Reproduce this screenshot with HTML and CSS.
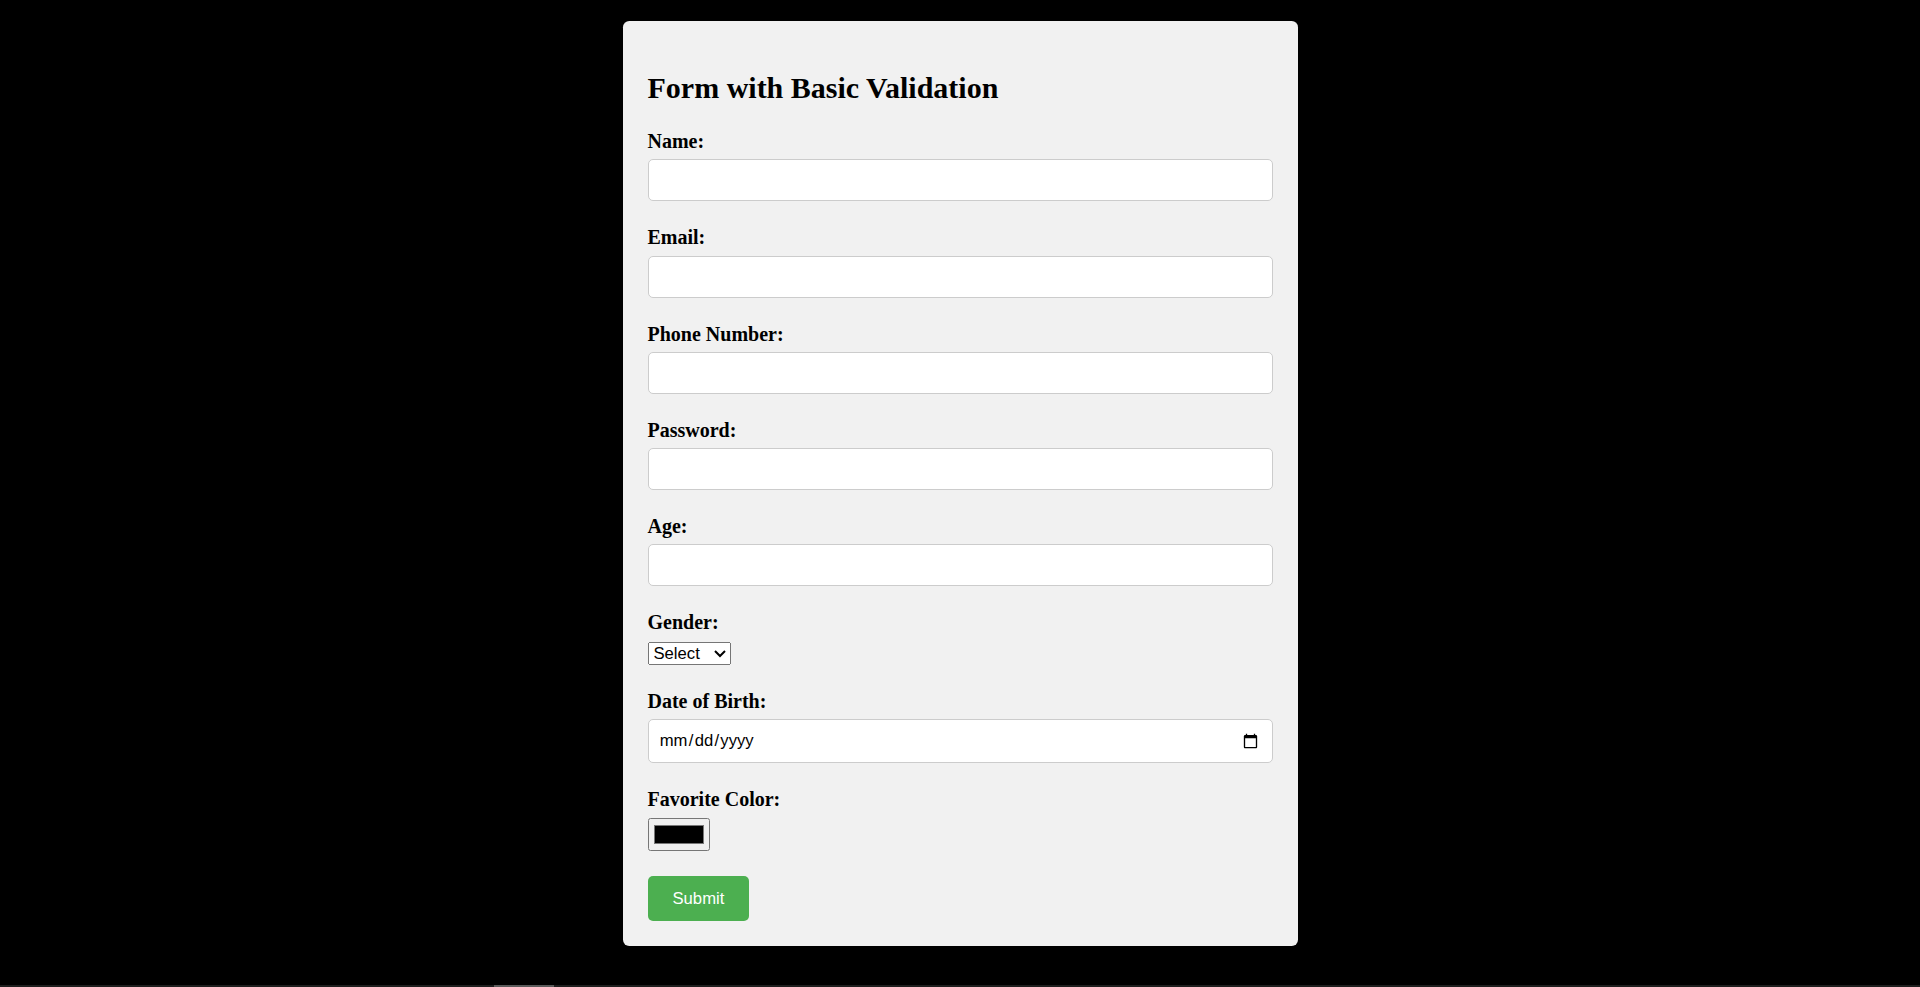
FILE: index.html
```html
<!DOCTYPE html>
<html lang="en">
<head>
<meta charset="utf-8">
<title>Form with Basic Validation</title>
<link rel="stylesheet" href="styles.css">
</head>
<body>
<div class="page">
  <div class="card">
    <h2 class="title">Form with Basic Validation</h2>
    <form class="form" novalidate>
      <div class="group">
        <label class="label" for="name">Name:</label>
        <input class="field" type="text" id="name">
      </div>
      <div class="group">
        <label class="label" for="email">Email:</label>
        <input class="field" type="email" id="email">
      </div>
      <div class="group">
        <label class="label" for="phone">Phone Number:</label>
        <input class="field" type="tel" id="phone">
      </div>
      <div class="group">
        <label class="label" for="password">Password:</label>
        <input class="field" type="password" id="password">
      </div>
      <div class="group">
        <label class="label" for="age">Age:</label>
        <input class="field" type="number" id="age">
      </div>
      <div class="group">
        <label class="label" for="gender">Gender:</label>
        <select class="select" id="gender">
          <option>Select</option>
          <option>Male</option>
          <option>Female</option>
          <option>Other</option>
        </select>
      </div>
      <div class="group">
        <label class="label" for="dob">Date of Birth:</label>
        <input class="field" type="date" id="dob">
      </div>
      <div class="group">
        <label class="label" for="color">Favorite Color:</label>
        <input class="color" type="color" id="color" value="#000000">
      </div>
      <button class="submit" type="submit">Submit</button>
    </form>
  </div>
</div>
<div class="hscroll"><div class="hscroll-thumb"></div></div>
</body>
</html>
```

FILE: styles.css
```css
html, body {
  margin: 0;
  padding: 0;
}

body {
  background: #000000;
  font-family: "Liberation Serif", "Times New Roman", serif;
  color: #000000;
  overflow: hidden;
}

.page {
  zoom: 1.25;
  display: flex;
  justify-content: center;
  padding-top: 17px;
}

.card {
  width: 500px;
  padding: 20px;
  background: #f1f1f1;
  border-radius: 5px;
}

.title {
  font-size: 24px;
  font-weight: bold;
  margin: 0.83em 0;
}

.form {
  margin: 0;
}

.group {
  margin-bottom: 20px;
}

.label {
  display: block;
  font-weight: bold;
  font-size: 16px;
  margin-bottom: 5px;
}

.field {
  display: block;
  width: 100%;
  box-sizing: border-box;
  padding: 8px;
  border: 1px solid #cccccc;
  border-radius: 4px;
  background: #ffffff;
  font-family: "Liberation Sans", Arial, sans-serif;
  font-size: 13.333px;
}

.select {
  font-family: "Liberation Sans", Arial, sans-serif;
  font-size: 13.333px;
}

.color {
  display: block;
}

.submit {
  display: block;
  padding: 10px 20px;
  border: none;
  border-radius: 4px;
  background: #4caf50;
  color: #ffffff;
  font-family: "Liberation Sans", Arial, sans-serif;
  font-size: 13.333px;
  cursor: pointer;
}

.hscroll {
  position: fixed;
  left: 0;
  right: 0;
  bottom: 0;
  height: 2px;
  background: #1e1e1e;
}

.hscroll-thumb {
  position: absolute;
  left: 494px;
  width: 60px;
  top: 0;
  bottom: 0;
  background: #5a5a5a;
}
```
